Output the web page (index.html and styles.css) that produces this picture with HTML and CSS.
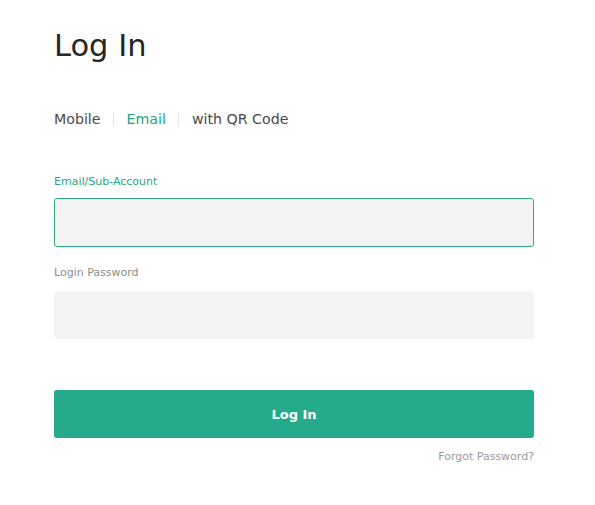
FILE: index.html
```html
<!DOCTYPE html>
<html>
<head>
<meta charset="utf-8">
<link rel="stylesheet" href="styles.css">
</head>
<body>
<div class="page">
  <h1 class="title">Log In</h1>
  <div class="tabs">
    <span class="tab">Mobile</span>
    <span class="sep"></span>
    <span class="tab active">Email</span>
    <span class="sep"></span>
    <span class="tab">with QR Code</span>
  </div>
  <label class="label label-active">Email/Sub-Account</label>
  <div class="input input-focus"></div>
  <label class="label label-pw">Login Password</label>
  <div class="input input-pw"></div>
  <button class="btn">Log In</button>
  <div class="forgot">Forgot Password?</div>
</div>
</body>
</html>
```

FILE: styles.css
```css
* { box-sizing: border-box; }
html, body { margin: 0; padding: 0; background: #fff; }
body { font-family: "DejaVu Sans", sans-serif; color: #333; }
.page {
  width: 595px;
  padding: 28px 61px 0 54px;
  display: flex;
  flex-direction: column;
}
.title {
  margin: 0;
  font-size: 30.5px;
  line-height: 36px;
  font-weight: normal;
  color: #262626;
}
.tabs {
  margin-top: 45px;
  display: flex;
  align-items: center;
  height: 20px;
  font-size: 14.2px;
  line-height: 20px;
  color: #4a4a4a;
}
.sep {
  width: 1px;
  height: 14px;
  background: #e3e3e3;
  margin: 0 12.5px;
}
.tab.active { color: #25a586; }
.label {
  display: block;
  font-size: 11px;
  line-height: 14px;
  color: #8c8c8c;
}
.label-active { margin-top: 46px; color: #27a686; }
.label-pw { margin-top: 19px; }
.input {
  height: 49px;
  border-radius: 3px;
  background: #f4f4f4;
  border: 1px solid #f4f4f4;
}
.input-focus { margin-top: 9px; border-color: #35a888; }
.input-pw { margin-top: 11px; height: 48px; }
.btn {
  margin-top: 51px;
  height: 48px;
  border: none;
  border-radius: 3px;
  background: #25ab8b;
  color: #fff;
  font-family: "DejaVu Sans", sans-serif;
  font-weight: bold;
  font-size: 13px;
  padding: 0;
}
.forgot {
  margin-top: 12px;
  text-align: right;
  font-size: 11px;
  line-height: 14px;
  color: #9a9a9a;
}
```
